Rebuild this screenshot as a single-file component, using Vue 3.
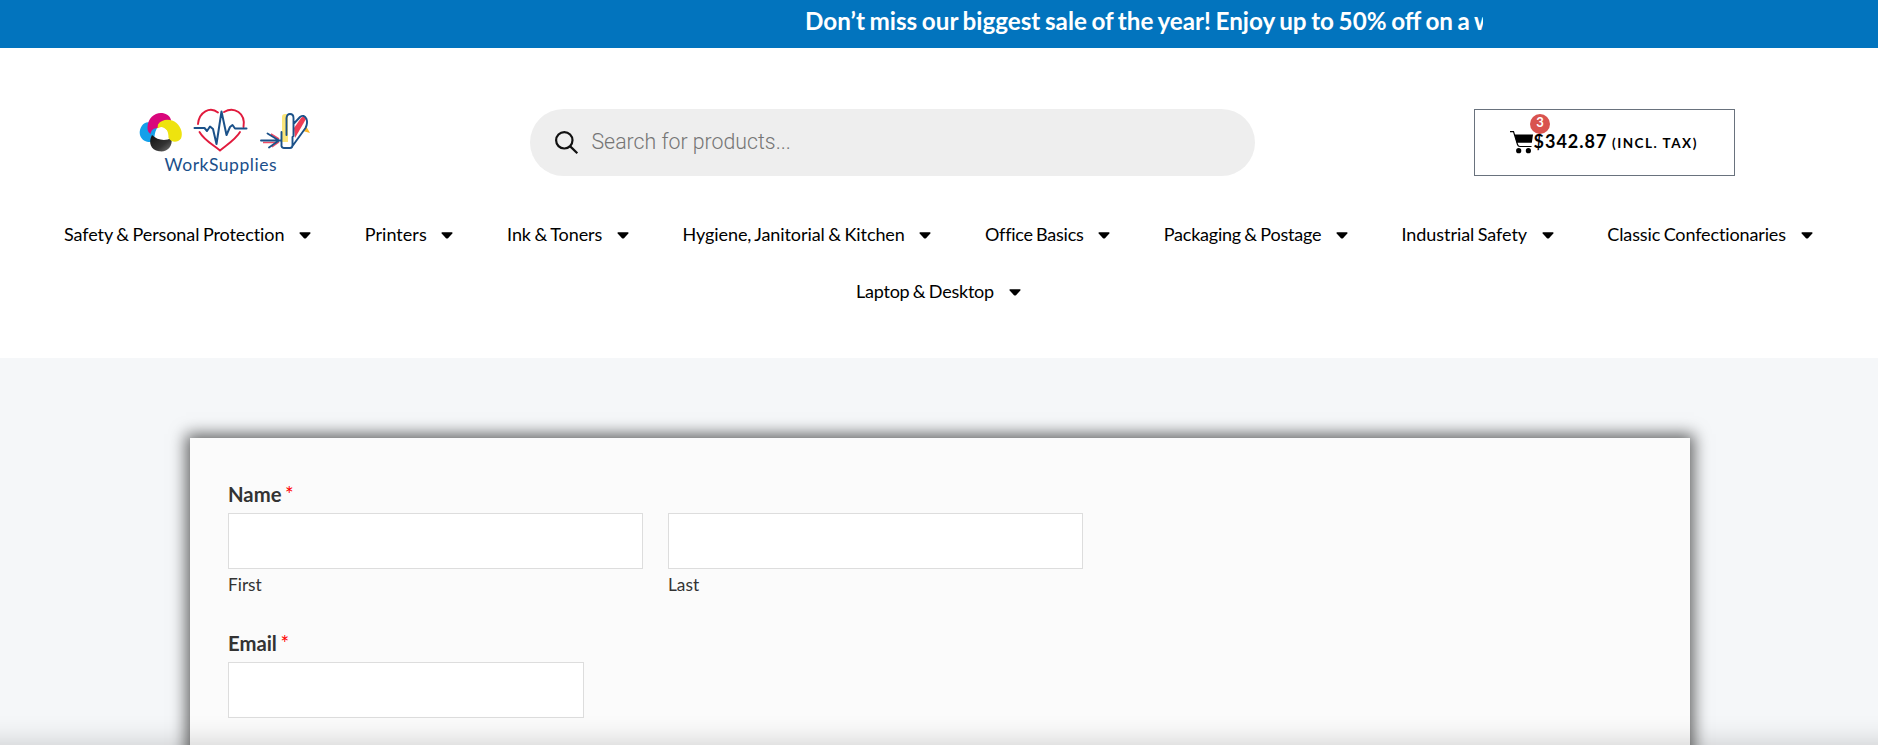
<script setup>
// Each entry: label and its tracking in pixels
const rows = [
  [
    ['Safety & Personal Protection', -0.085],
    ['Printers', 0.05],
    ['Ink & Toners', -0.07],
    ['Hygiene, Janitorial & Kitchen', -0.085],
    ['Office Basics', -0.25],
    ['Packaging & Postage', -0.23],
    ['Industrial Safety', -0.06],
    ['Classic Confectionaries', -0.13],
  ],
  [['Laptop & Desktop', -0.23]],
]
</script>

<template>
  <div class="page">
    <div class="banner">
      <div class="ticker">Don’t miss our biggest sale of the year! Enjoy up to 50% off on a w</div>
    </div>
    <header class="header">
      <div class="top">
        <svg class="logo" width="190" height="80" viewBox="0 0 190 80">
          <defs>
            <linearGradient id="ink" x1="0" y1="0" x2="1" y2="1">
              <stop offset="0" stop-color="#111" />
              <stop offset=".6" stop-color="#333" />
              <stop offset="1" stop-color="#777" />
            </linearGradient>
          </defs>
          <path d="M20.500 22.500C14 20.500 9.500 27 9.700 33C10 40 17 43.500 24.500 41.500C24 37 25 30 28 27Z" fill="#14a0ea" />
          <path d="M22 35C18 42 20.500 50 29 51.300C37 52.500 43 47 41.500 38C35 41.500 27 40 22 35Z" fill="url(#ink)" />
          <path d="M17.500 27C18 17 26 11.500 33.500 13.200C40 14.500 42.500 20 40.500 25C34 20.500 29 23.500 28 28C24 28 21 30 20.500 34C18 32 17.300 30 17.500 27Z" fill="#d9067c" />
          <path d="M28 24.500C32 18.500 41 18.500 46.500 23C51.500 27.500 53 34 51 38.500C47 43.500 41 42 38.500 38C38.500 34 38 31.500 36 29.500C33.500 27 31 26.500 27.500 28.500Z" fill="#eee30e" />
          <path d="M27 29.500L31.500 27L37 30.500L37.500 36L30 38.500L25.500 35Z" fill="#fff" />
          <path d="M68 24C69 12 80 6 88 12.500M94 12C104 6 116 13 113.500 27M69.500 32C74 40 82 44 90 50.500C98 44 106 39 110 32" fill="none" stroke="#e11b3d" stroke-width="1.900" stroke-linecap="round" />
          <path d="M64.500 28H74.500L77 31L80 26.500L83 29L86.500 44L91.500 11.500L96.500 35L100 27L102.500 25L105 28.500H116.500" fill="none" stroke="#1b5189" stroke-width="2" stroke-linejoin="round" stroke-linecap="round" />
          <path d="M152 17Q152 14 155 14H158V42H152Z" fill="#fbe579" />
          <path d="M164 28L171 18Q174 15 176 19L165 38Z" fill="#ef3e55" />
          <path d="M176 26L180 33L173 31Z" fill="#fdb827" />
          <path d="M133 42.500H147M141 34L149 39M142 47L149 42" stroke="#ef4b65" stroke-width="1.500" />
          <path d="M131 40.500H151M137.500 33.500L149 40.500L139 47.500M151.500 32V46Q152 48 154 48H160Q162.500 48 162.500 45V37M156.500 35V18Q157 14 160 14Q163.500 14 163.500 18V36M162.500 46L175.500 28Q178 23 176.500 19Q174 14 170 17L163.500 24" fill="none" stroke="#1b5189" stroke-width="1.900" stroke-linecap="round" stroke-linejoin="round" />
          <text x="34.500" y="71" textLength="112" lengthAdjust="spacing" class="logo-text">WorkSupplies</text>
        </svg>
        <label class="search">
          <svg width="24" height="24" viewBox="0 0 24 24" fill="none" stroke="#111" stroke-width="2.200">
            <circle cx="9.300" cy="9.300" r="8.200" />
            <path d="M15 15.100L22.300 22.200" />
          </svg>
          <span>Search for products...</span>
        </label>
        <a class="cart">
          <span class="cart-icon">
            <svg width="23" height="23" viewBox="0 0 23 23">
              <path d="M0 .6H3.500L7.500 13.500Q8 15.500 10 15.500H21.500" fill="none" stroke="#000" stroke-width="1.200" />
              <path d="M4.500 3.500H23L21.800 11.700H6.700Z" />
              <circle cx="8.700" cy="19.700" r="2.600" />
              <circle cx="18.400" cy="19.700" r="2.600" />
            </svg>
            <b class="badge">3</b>
          </span>
          <span class="price">$342.87</span>
          <span class="tax">(INCL. TAX)</span>
        </a>
      </div>
      <nav class="nav">
        <div v-for="(row, i) in rows" :key="i" class="nav-row">
          <a v-for="[name, tracking] in row" :key="name" class="nav-item">
            <span :style="{ letterSpacing: tracking + 'px' }">{{ name }}</span>
            <svg width="12" height="7" viewBox="0 0 12 7"><path d="M1 .2H11Q12 .5 11.300 1.500L7 6.200Q6 7 5 6.200L.700 1.500Q0 .5 1 .2Z" /></svg>
          </a>
        </div>
      </nav>
    </header>
    <main class="panel">
      <div class="label">Name <i>*</i></div>
      <div class="names">
        <div><div class="field"></div><div class="sub">First</div></div>
        <div><div class="field"></div><div class="sub">Last</div></div>
      </div>
      <div class="label email">Email <i>*</i></div>
      <div class="field short"></div>
    </main>
    <div class="bottom-bar"></div>
  </div>
</template>

<style>
body { margin: 0; overflow: hidden; }
</style>

<style scoped>
* { box-sizing: border-box; }
.page { height: 745px; overflow: hidden; background: #f5f7f9; font-family: Lato, sans-serif; color: #000; position: relative; }
.banner { height: 48px; background: #0274be; }
.ticker { margin-left: 805px; width: 678px; height: 42px; line-height: 42px; overflow: hidden; white-space: nowrap; color: #fff; font-size: 24.250px; font-weight: 700; word-spacing: -1.350px; }
.header { height: 310px; background: #fff; padding-top: 52px; }
.top { display: flex; align-items: flex-start; height: 80px; padding-left: 130px; }
.logo { flex: none; }
.logo-text { font-family: Lato, sans-serif; font-size: 17.500px; fill: #1b4f8a; }
.search { flex: none; width: 725px; height: 67px; margin: 9px 0 0 210px; border-radius: 34px; background: #eee; display: flex; align-items: center; padding-left: 25px; }
.search span { margin: -2px 0 0 12.500px; font: 300 21.300px Roboto, sans-serif; color: #757575; white-space: nowrap; }
.cart { flex: none; margin: 9px 0 0 219px; width: 261px; height: 67px; border: 1px solid #69727d; display: flex; align-items: baseline; padding: 21px 0 0 35px; white-space: nowrap; }
.cart-icon { position: relative; width: 23.500px; height: 23px; align-self: flex-start; }
.badge { position: absolute; left: 20px; top: -17px; width: 20px; height: 20px; border-radius: 50%; background: #d9534f; color: #fff; font-size: 13px; line-height: 17px; text-align: center; }
.price { font-size: 18px; font-weight: 700; letter-spacing: 1px; line-height: 20px; }
.tax { font-size: 13.500px; font-weight: 700; letter-spacing: 1.500px; margin-left: 4.500px; }
.nav { padding-top: 26px; }
.nav-row { display: flex; justify-content: center; height: 57px; }
.nav-item { display: flex; align-items: center; height: 57px; padding: 0 27.500px 0 26.100px; font-size: 18px; word-spacing: -1px; white-space: nowrap; }
.nav-item span { margin-top: -2px; }
.nav-item svg { margin: 1px 0 0 14.700px; }
.panel { width: 1500px; height: 400px; margin: 80px auto 0 190px; background: #fbfbfb; box-shadow: 0 0 15px 4px rgba(0, 0, 0, .6); padding: 43px 38px 0; }
.label { height: 32px; line-height: 26px; font-size: 20.300px; font-weight: 700; color: #333; word-spacing: -1.400px; }
.label i { color: #f00; font-style: normal; font-weight: 400; }
.names { display: flex; gap: 25px; }
.names > div { width: 415px; }
.field { height: 56px; background: #fff; border: 1px solid #ddd; }
.sub { font-size: 17.300px; line-height: 22px; margin-top: 5px; color: #333; }
.email { margin-top: 34px; }
.short { width: 356px; }
.bottom-bar { position: absolute; left: -40px; right: -40px; top: 745px; height: 60px; box-shadow: 0 0 30px rgba(0, 0, 0, .2); }
</style>
